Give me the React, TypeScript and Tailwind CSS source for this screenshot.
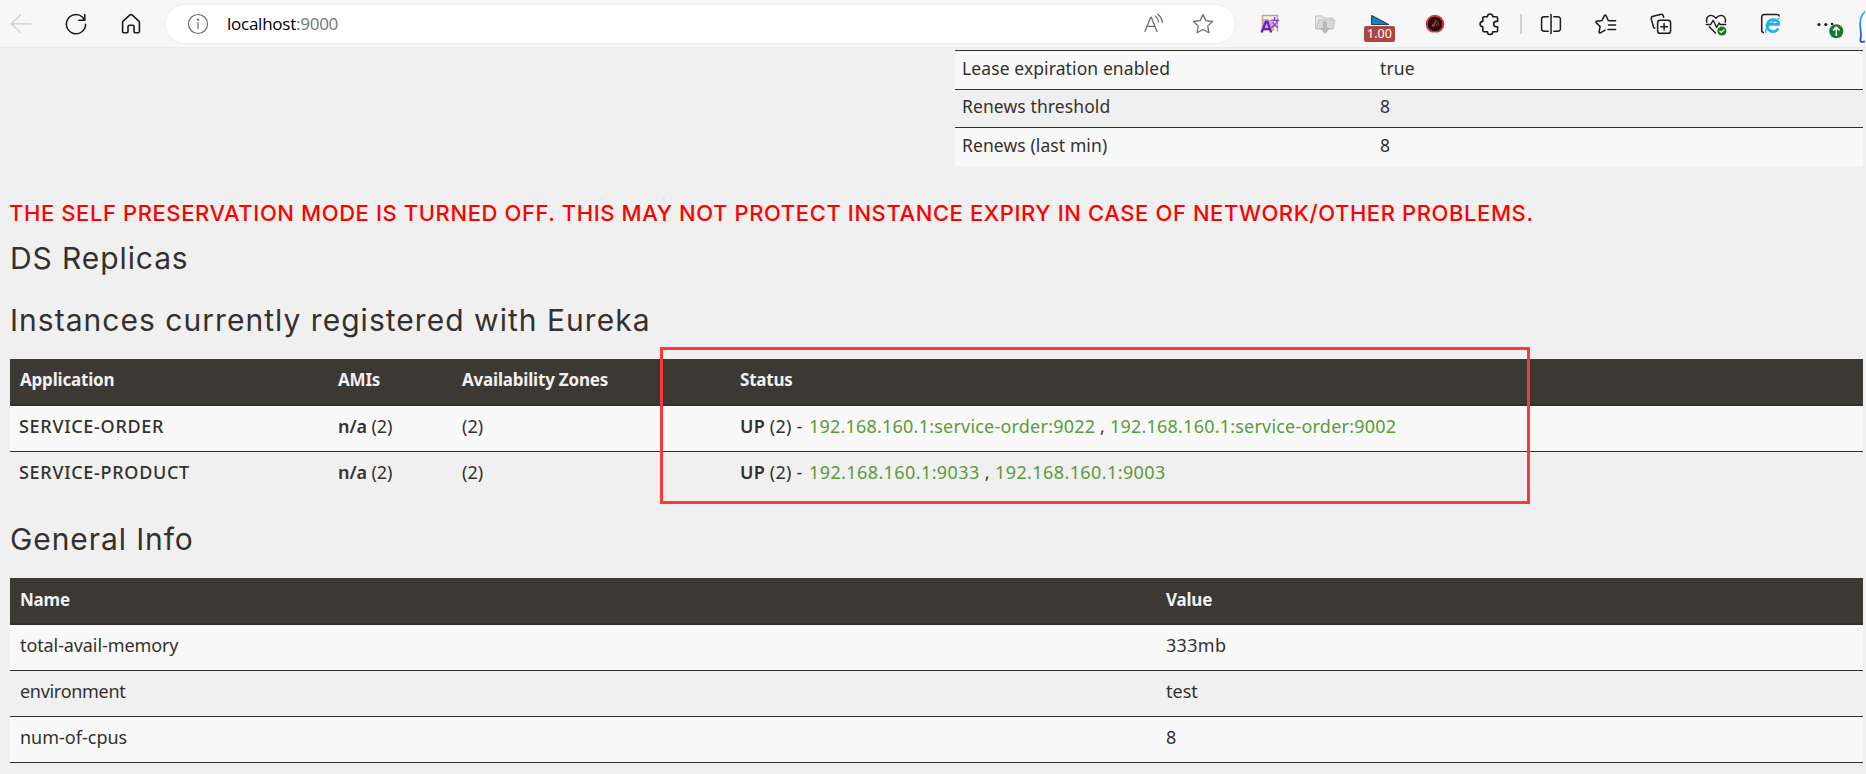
import React from "react";

type IconProps = { children: React.ReactNode; className?: string; w?: number };

function Icon({ children, className = "text-[#1b1b1b]", w = 1.5 }: IconProps) {
  return (
    <svg
      width="22"
      height="22"
      viewBox="0 0 22 22"
      fill="none"
      stroke="currentColor"
      strokeWidth={w}
      strokeLinecap="round"
      strokeLinejoin="round"
      className={"shrink-0 overflow-visible " + className}
    >
      {children}
    </svg>
  );
}

function Slot({ children }: { children: React.ReactNode }) {
  return <button className="relative flex h-[47px] w-[55px] shrink-0 items-center justify-center">{children}</button>;
}

function Toolbar() {
  return (
    <header className="flex h-[48px] shrink-0 items-center overflow-hidden border-b border-[#ebebeb] bg-[#f7f7f7]">
      <nav className="flex gap-[13px]">
        <button className="flex w-[42px] justify-center">
          <Icon className="text-[#cdcdcd]" w={1.2}>
            <path d="M20.8 10.8H1.3M10.6 2 1.3 10.8l9.3 8.8" />
          </Icon>
        </button>
        <button className="flex w-[42px] justify-center">
          <Icon>
            <path d="M20.6 11.2A9.6 9.6 0 1 1 17.4 4l2.2 3" />
            <path d="M19.8 1.6v5.6h-6" />
          </Icon>
        </button>
        <button className="flex w-[42px] justify-center">
          <Icon w={1.6}>
            <path d="M2.6 9.6c0-.7.3-1.3.8-1.8l6.3-5.6a2 2 0 0 1 2.6 0l6.3 5.6c.5.5.8 1.1.8 1.8v8.9a1.3 1.3 0 0 1-1.3 1.3h-2.8a1.3 1.3 0 0 1-1.3-1.3v-4.7a1.6 1.6 0 0 0-1.6-1.6h-2.8a1.6 1.6 0 0 0-1.6 1.6v4.7a1.3 1.3 0 0 1-1.3 1.3H3.9a1.3 1.3 0 0 1-1.3-1.3z" />
          </Icon>
        </button>
      </nav>

      <div className="ml-[14px] flex h-[38px] w-[1069px] shrink-0 items-center rounded-full bg-white pl-[21px] shadow-[0_0_3px_rgba(0,0,0,0.08)]">
        <Icon className="text-[#6b6b6b]" w={1.2}>
          <circle cx="11" cy="11" r="9.5" />
          <path d="M11 9.6v6.2" />
          <circle cx="11" cy="6.7" r=".5" fill="currentColor" />
        </Icon>
        <div className="ml-[18px] flex font-['Open_Sans','Noto_Sans',sans-serif] text-[17px] leading-6 tracking-[-0.25px]">
          <span className="text-black">localhost</span>
          <span className="text-[#767676]">:9000</span>
        </div>
        <div className="ml-auto flex gap-[27px] pr-[21px]">
          <Icon className="text-[#6f6f6f]" w={1.3}>
            <path d="m2 18.4 5.7-14.2h.6L14 18.4M4 13.4h8" />
            <path d="M12.4 3.2a7.5 7.5 0 0 1 3.2 5.6M14.8 1.4a10.5 10.5 0 0 1 4.4 8.2" />
          </Icon>
          <Icon className="text-[#6f6f6f]" w={1.3}>
            <path d="m11 1.6 2.9 6 6.6.9-4.8 4.6 1.2 6.6-5.9-3.2-5.9 3.2 1.2-6.6L1.5 8.500l6.6-.9z" />
          </Icon>
        </div>
      </div>

      <div className="ml-[7px] flex shrink-0 items-center">
        <Slot>
          <Icon>
            <path d="M3.5 18V2.5h15V18" stroke="#c9a17c" />
            <path d="M4 6h11v12H4z" fill="#dbb07e" stroke="none" />
            <path d="M5 4h11l-3 5-4-3z" fill="#f4ece4" stroke="none" />
            <path d="M2.5 19.5 7 8.5h1.5l3.6 11M4 16h7" stroke="#6418ee" strokeWidth="2.2" strokeLinecap="butt" />
            <path d="M12 7.3h7.5M15.6 4.5v2.5M17.8 8c-.6 2.8-2.3 5-5 6.2M14 9.5c1 2 2.5 3.6 4.5 4.6" stroke="#7a3bf0" strokeWidth="1.3" />
          </Icon>
        </Slot>
        <Slot>
          <Icon w={1}>
            <path d="M1.5 15.5V3h7l1.5 2h9v10.500z" fill="#e6e6e6" stroke="#c4c4c4" />
            <path d="M2.5 15.5 4.5 7h16.3l-1.5 8.500z" fill="#dadada" stroke="#c2c2c2" />
            <path d="M9.7 9h2.6v6.5h2.8L11 20.3l-4.1-4.8h2.800z" fill="#bdbdbd" stroke="#adadad" />
          </Icon>
        </Slot>
        <Slot>
          <Icon w={1.1}>
            <path d="M2.6 2.5 19.5 11.5H2.6z" fill="#1389bb" stroke="#17475b" />
          </Icon>
          <span className="absolute left-[12px] top-[26px] flex h-[16px] w-[31px] items-center justify-center rounded-[2px] bg-[#ad4545] font-['Noto_Sans',sans-serif] text-[12.5px] leading-none text-white">
            1.00
          </span>
        </Slot>
        <Slot>
          <Icon>
            <circle cx="11" cy="11" r="8.3" fill="#191617" stroke="#e0353a" strokeWidth="2" />
            <path d="M6.5 21h9z" stroke="#f7f7f7" strokeWidth="3" />
            <circle cx="9.3" cy="12.3" r="1.5" fill="#d22a2a" stroke="none" />
            <path d="m10 12 1.8-4.5M10 9.5a4 4 0 0 1 3.2 3.5M10.8 7.2a6 6 0 0 1 4.2 5" stroke="#c42a2a" strokeWidth="1" />
          </Icon>
        </Slot>
        <Slot>
          <Icon w={1.6}>
            <path d="M5.2 3.7h3.2a2.7 2.7 0 0 1 5.4 0h3.4a1.4 1.4 0 0 1 1.4 1.4v3.3h-1.3a2.7 2.7 0 0 0 0 5.4h1.3v3.6a1.4 1.4 0 0 1-1.4 1.4h-3.4a2.7 2.7 0 0 1-5.4 0H5.2a1.4 1.4 0 0 1-1.4-1.4v-3.6a2.7 2.7 0 0 1 0-5.4V5.1a1.4 1.4 0 0 1 1.4-1.4z" />
          </Icon>
        </Slot>
        <div className="ml-[3px] mr-[1px] h-[20px] w-[2px] bg-[#cfcfcf]" />
        <Slot>
          <Icon>
            <path d="M11 1.5v19M8.2 3.8H4A2.4 2.4 0 0 0 1.6 6.2v9.6A2.4 2.4 0 0 0 4 18.2h4.2M13.8 3.8H18a2.4 2.4 0 0 1 2.4 2.4v9.6a2.4 2.4 0 0 1-2.4 2.4h-4.2" />
          </Icon>
        </Slot>
        <Slot>
          <Icon>
            <path d="M20.6 7.7h-5.500l-1.8-.2-2.4-5.1a.8.8 0 0 0-1.4 0L7 7.5l-5.5.8a.8.8 0 0 0-.4 1.3l4 3.9-1 5.5a.8.8 0 0 0 1.2.8l4.9-2.6M13.5 12.1h7.1M13 16.5h7.6" />
          </Icon>
        </Slot>
        <Slot>
          <Icon>
            <rect x="7.6" y="7.3" width="13" height="13" rx="2.6" />
            <path d="M14.1 10.5v6.6M10.8 13.8h6.6M4.8 15.2a2.5 2.5 0 0 1-1.5-1.8L1.3 6.3a2.5 2.5 0 0 1 1.8-3l7.3-1.9a2.5 2.5 0 0 1 3 1.8l.3 1.1" />
          </Icon>
        </Slot>
        <Slot>
          <Icon w={1.4}>
            <path d="M1.8 9.2C.7 5.5 3 2.4 6 2.4c2.2 0 3.7 1.2 5 2.8 1.3-1.6 2.8-2.8 5-2.8 3 0 5.3 3.1 4.2 6.8M1.3 11.5h4.3l2.6-4.2 3.5 7.2 2.4-4.5 1 1.5h5.6M4.2 13.8l6.3 6.3" />
            <circle cx="16.9" cy="18" r="4.5" fill="#107c10" stroke="none" />
            <path d="m14.9 18.2 1.4 1.3 2.6-2.6" stroke="#fff" strokeWidth="1.3" />
          </Icon>
        </Slot>
        <Slot>
          <Icon>
            <path d="M3.3 19.5c-1-.3-1.6-1-1.6-2V4.2a2.8 2.8 0 0 1 2.8-2.8h12.6c1 0 1.8.6 2.1 1.5" />
            <path d="M18.3 15.6a6 6 0 1 1 .7-4.2H8.6" stroke="#1fb1ee" strokeWidth="2.8" strokeLinecap="butt" />
            <path d="M5.9 19.3c-1.8-2.3 5.5-11.5 13.3-14" stroke="#1fb1ee" strokeWidth="1.3" />
          </Icon>
        </Slot>
        <Slot>
          <Icon>
            <g fill="currentColor" stroke="none">
              <circle cx="4" cy="11.5" r="1.6" />
              <circle cx="10.8" cy="11.5" r="1.6" />
              <circle cx="17" cy="11" r="1.3" />
            </g>
            <circle cx="21.3" cy="18.2" r="7" fill="#137a35" stroke="none" />
            <path d="M21.3 22.2v-7.8M18.4 17l2.9-2.9 2.9 2.9" stroke="#fff" strokeWidth="1.6" />
          </Icon>
        </Slot>
        <svg width="6" height="34" viewBox="0 0 6 34" className="ml-[6px] mt-[6px]" fill="none">
          <defs>
            <linearGradient id="chat" x1="0" y1="0" x2="0" y2="1">
              <stop offset="0" stopColor="#30bdf2" />
              <stop offset="1" stopColor="#1f4fc9" />
            </linearGradient>
          </defs>
          <path d="M7 1C2 4.5.9 9.5 1.2 15c.2 5 1.5 9 .3 14.5-.6 2.5.6 3.2 5.5 1.5z" fill="#fff" stroke="url(#chat)" strokeWidth="1.8" />
        </svg>
      </div>
    </header>
  );
}

const leases = [
  { name: "Lease expiration enabled", value: "true", row: "h-[39px] bg-[#f9f9f9] pb-[4px]" },
  { name: "Renews threshold", value: "8", row: "h-[38px] pb-[5px]" },
  { name: "Renews (last min)", value: "8", row: "h-[39px] bg-[#f9f9f9] pb-[4px]" },
];

const services = [
  {
    name: "SERVICE-ORDER",
    row: "h-[45px] bg-[#f9f9f9]",
    links: ["192.168.160.1:service-order:9022", "192.168.160.1:service-order:9002"],
    track: "tracking-[0.21px]",
  },
  {
    name: "SERVICE-PRODUCT",
    row: "h-[46px] border-t border-[#2f2f2f]",
    links: ["192.168.160.1:9033", "192.168.160.1:9003"],
    track: "tracking-[0.4px]",
  },
];

const info = [
  { name: "total-avail-memory", value: "333mb", row: "bg-[#f9f9f9]", track: "tracking-[-0.1px]", vtrack: "tracking-[0.3px]" },
  { name: "environment", value: "test", row: "", track: "tracking-[-0.3px]", vtrack: "" },
  { name: "num-of-cpus", value: "8", row: "bg-[#f9f9f9]", track: "tracking-[0px]", vtrack: "" },
];

const headRow = "flex h-[47px] items-center border-b-2 border-[#34302d] bg-[#3c3833] text-[17px] font-bold text-[#f1f1f1] tracking-[-0.2px]";
const heading = "font-[Inter,sans-serif] text-[30px] font-normal leading-[36px] text-[#34302d]";

export default function App() {
  return (
    <div className="flex h-[774px] w-[1866px] flex-col overflow-hidden bg-[#f0f0f0] font-['Noto_Sans',sans-serif] text-[18px] leading-6 text-[#34302d]">
      <Toolbar />
      <main className="flex flex-col pl-[10px] pr-[3px] pt-[2px]">
        <section className="ml-[945px] flex flex-col text-[17.5px] tracking-[0.1px]">
          {leases.map((l) => (
            <div key={l.name} className={"flex items-center border-t border-[#2f2f2f] pl-[7px] " + l.row}>
              <span className="w-[418px]">{l.name}</span>
              <span>{l.value}</span>
            </div>
          ))}
        </section>

        <p className="-ml-px mt-[35px] font-[Inter,sans-serif] text-[22px] font-medium leading-6 tracking-[0.59px] whitespace-nowrap text-[#ff0000]">
          THE SELF PRESERVATION MODE IS TURNED OFF. THIS MAY NOT PROTECT INSTANCE EXPIRY IN CASE OF NETWORK/OTHER PROBLEMS.
        </p>
        <h1 className={"mt-[15px] tracking-[0.9px] " + heading}>DS Replicas</h1>
        <h1 className={"mt-[26px] tracking-[1.03px] " + heading}>Instances currently registered with Eureka</h1>

        <section className="relative mt-[21px] flex flex-col">
          <div className={"pb-[3px] " + headRow}>
            <span className="w-[328px] pl-[10px]">Application</span>
            <span className="w-[124px]">AMIs</span>
            <span className="w-[278px]">Availability Zones</span>
            <span>Status</span>
          </div>
          {services.map((s) => (
            <div key={s.name} className={"flex items-center pb-[5px] " + s.row}>
              <span className="w-[328px] pl-[9px] font-medium tracking-[0.7px]">{s.name}</span>
              <span className="w-[124px] tracking-[-0.1px]">
                <b className="font-semibold">n/a</b> (2)
              </span>
              <span className="w-[278px]">(2)</span>
              <span className="w-[69px] whitespace-nowrap tracking-[0.2px]">
                <b className="font-semibold">UP</b> (2) -
              </span>
              <span className={"whitespace-nowrap " + s.track}>
                <a className="text-[#5a9b38]">{s.links[0]}</a> , <a className="text-[#5a9b38]">{s.links[1]}</a>
              </span>
            </div>
          ))}
          <div className="absolute left-[650px] top-[-12px] h-[157px] w-[870px] border-[3px] border-[#fb3838]" />
        </section>

        <h1 className={"mt-[24px] tracking-[0.9px] " + heading}>General Info</h1>

        <section className="mt-[21px] flex flex-col">
          <div className={"pb-[2px] " + headRow}>
            <span className="w-[1156px] pl-[10px]">Name</span>
            <span>Value</span>
          </div>
          {info.map((r) => (
            <div key={r.name} className={"flex h-[46px] items-center border-b border-[#2f2f2f] pb-[5px] " + r.row}>
              <span className={"w-[1156px] pl-[10px] " + r.track}>{r.name}</span>
              <span className={r.vtrack}>{r.value}</span>
            </div>
          ))}
        </section>
      </main>
    </div>
  );
}
